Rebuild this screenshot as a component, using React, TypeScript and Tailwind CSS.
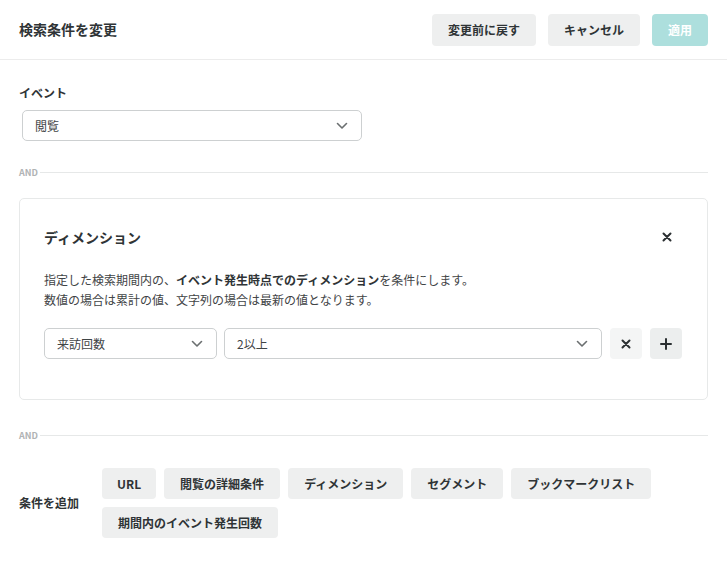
import React from 'react';

const font = { fontFamily: '"Noto Sans CJK JP", "Noto Sans", sans-serif' };

const Chevron: React.FC = () => (
  <svg width="12" height="8" viewBox="0 0 12 8" fill="none">
    <path d="M1.5 1.5L6 6L10.5 1.5" stroke="#6b6f70" strokeWidth="1.6" strokeLinecap="round" strokeLinejoin="round" />
  </svg>
);

const Cross: React.FC<{ size?: number }> = ({ size = 10 }) => (
  <svg width={size} height={size} viewBox="0 0 10 10" fill="none">
    <path d="M1.5 1.5L8.5 8.5M8.5 1.5L1.5 8.5" stroke="#2b3032" strokeWidth="2" strokeLinecap="round" />
  </svg>
);

const Plus: React.FC = () => (
  <svg width="12" height="12" viewBox="0 0 12 12" fill="none">
    <path d="M6 1V11M1 6H11" stroke="#2b3032" strokeWidth="2" strokeLinecap="round" />
  </svg>
);

const AndDivider: React.FC = () => (
  <div className="flex items-center h-3">
    <span className="text-[9px] font-bold text-[#b0b3b4] leading-none">AND</span>
    <div className="flex-1 border-t border-[#e6e8e8] ml-[2px]" />
  </div>
);

const Select: React.FC<{ value: string; className: string }> = ({ value, className }) => (
  <div
    className={`flex items-center justify-between h-[31px] border border-[#cdd0d1] rounded-[5px] pl-3 pr-[13px] text-[12px] text-[#3f4446] bg-white ${className}`}
  >
    <span>{value}</span>
    <Chevron />
  </div>
);

const GrayButton: React.FC<{ label: string }> = ({ label }) => (
  <button
    className={`h-[31px] rounded-[4px] bg-[#eeefef] text-[12px] font-bold text-[#2f3436] ${label === 'URL' ? 'px-[15px]' : 'px-4'}`}
  >
    {label}
  </button>
);

export default function App() {
  const addItems = ['URL', '閲覧の詳細条件', 'ディメンション', 'セグメント', 'ブックマークリスト', '期間内のイベント発生回数'];

  return (
    <div className="w-[727px] h-[588px] bg-white text-[#2f3436]" style={font}>
      <div className="h-[60px] border-b border-[#ececec] flex items-center justify-between pl-[19px] pr-[19px]">
        <h1 className="text-[14px] font-bold text-[#2f3436]">検索条件を変更</h1>
        <div className="flex gap-3">
          <button className="h-8 px-4 rounded-[4px] bg-[#eeefef] text-[12px] font-bold text-[#2f3436]">変更前に戻す</button>
          <button className="h-8 px-4 rounded-[4px] bg-[#eeefef] text-[12px] font-bold text-[#2f3436]">キャンセル</button>
          <button className="h-8 px-4 rounded-[4px] bg-[#addfdd] text-[12px] font-bold text-white">適用</button>
        </div>
      </div>

      <div className="px-[19px]">
        <div className="pt-[24px] text-[12px] font-bold leading-[18px] text-[#2f3436]">イベント</div>
        <Select value="閲覧" className="mt-[8px] ml-[3px] w-[340px]" />

        <div className="mt-[25px]">
          <AndDivider />
        </div>

        <div className="mt-[20px] border border-[#e7e9e9] rounded-[5px] pl-[24px] pr-[24px] pt-[26px] pb-[40px]">
          <div className="flex items-center justify-between h-[24px]">
            <h2 className="text-[14px] font-bold text-[#2f3436]">ディメンション</h2>
            <div className="w-8 h-6 flex items-center justify-center">
              <Cross />
            </div>
          </div>
          <div className="mt-[21px] text-[12px] leading-[20px] text-[#3f4446]">
            <p>
              指定した検索期間内の、<span className="font-bold text-[#2f3436]">イベント発生時点でのディメンション</span>を条件にします。
            </p>
            <p>数値の場合は累計の値、文字列の場合は最新の値となります。</p>
          </div>
          <div className="mt-[18px] flex items-center">
            <Select value="来訪回数" className="w-[173px]" />
            <Select value="2以上" className="ml-[7px] w-[378px]" />
            <button className="ml-[8px] w-[32px] h-[31px] rounded-[4px] bg-[#f4f5f5] flex items-center justify-center">
              <Cross />
            </button>
            <button className="ml-[8px] w-[32px] h-[31px] rounded-[4px] bg-[#eceeee] flex items-center justify-center">
              <Plus />
            </button>
          </div>
        </div>

        <div className="mt-[29px]">
          <AndDivider />
        </div>

        <div className="mt-[27px] flex items-center">
          <div className="w-[83px] shrink-0 text-[12px] font-bold text-[#2f3436]">条件を追加</div>
          <div className="flex flex-wrap gap-2">
            {addItems.map((item) => (
              <GrayButton key={item} label={item} />
            ))}
          </div>
        </div>
      </div>
    </div>
  );
}
